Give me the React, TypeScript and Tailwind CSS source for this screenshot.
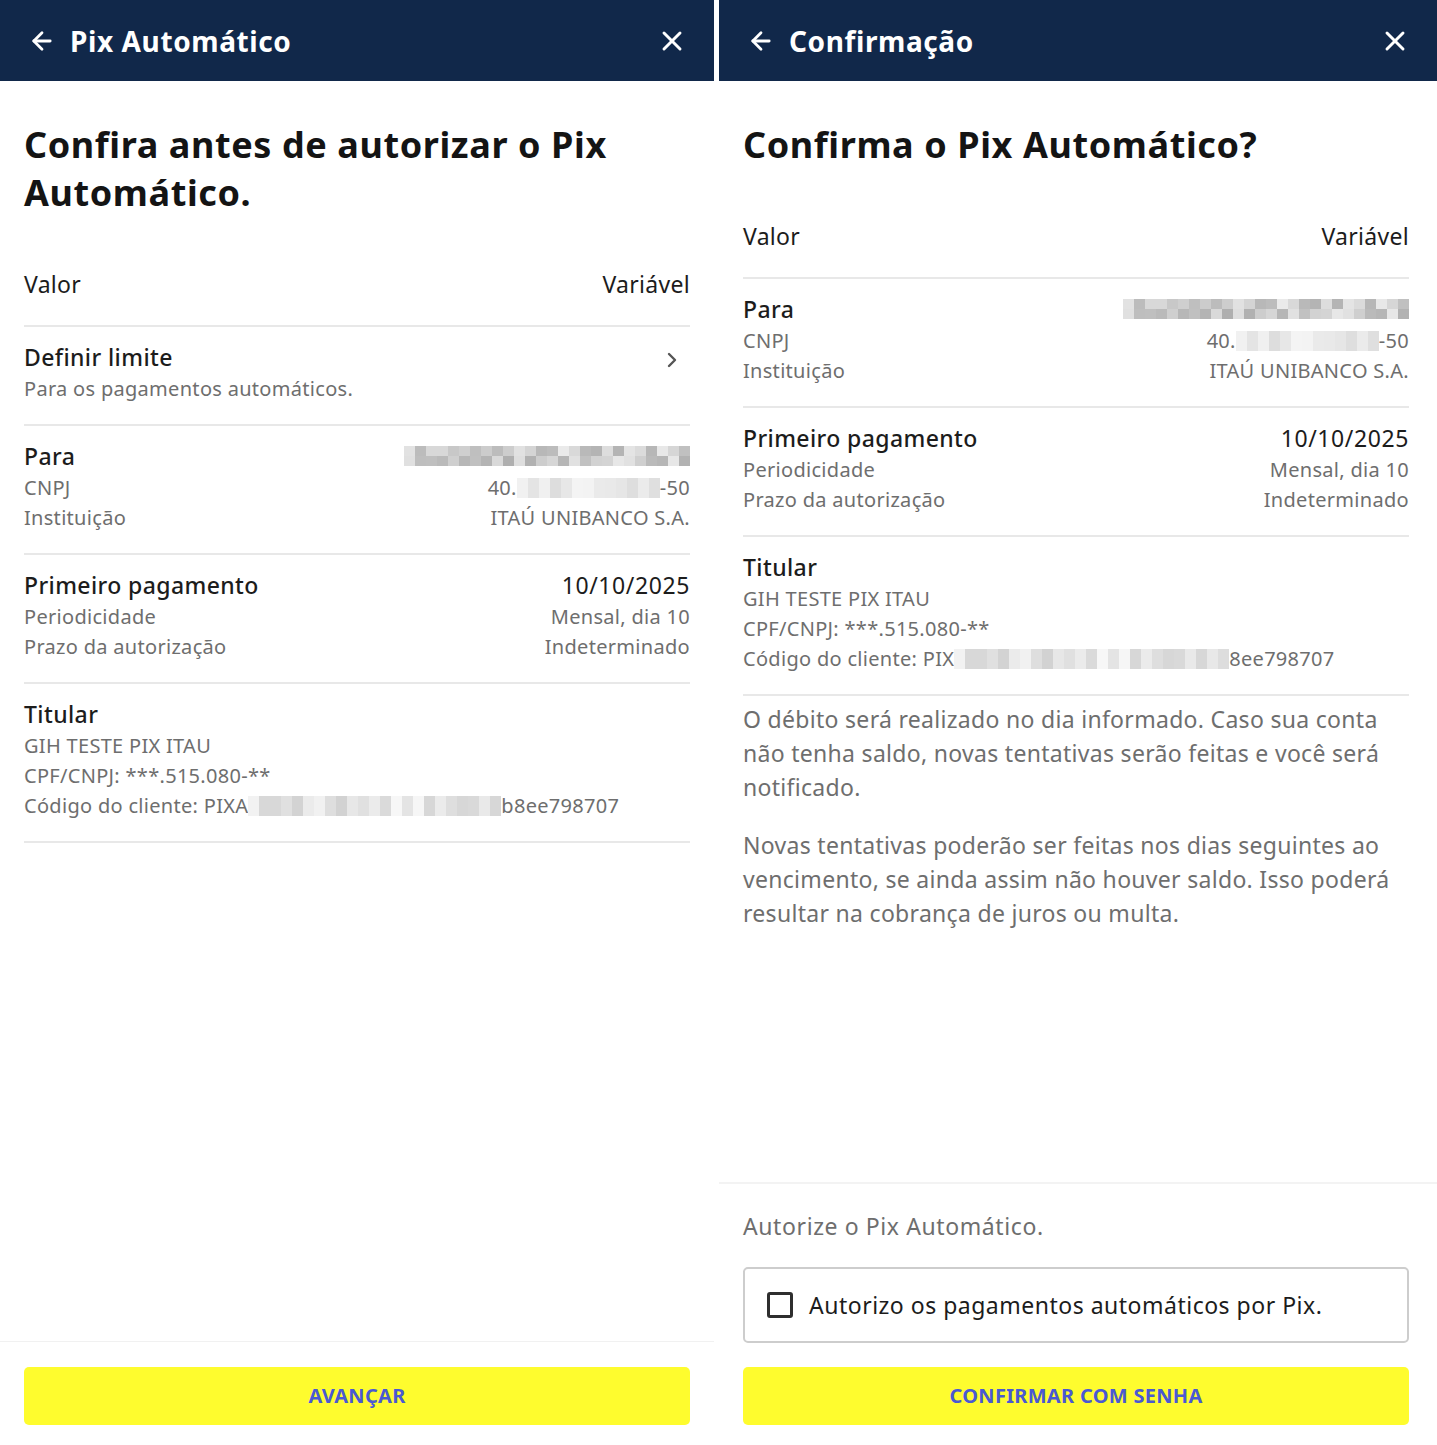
import { ArrowLeft, X, ChevronRight } from "lucide-react";

const font = { fontFamily: "'Noto Sans', 'Open Sans', sans-serif" };

function shade(seed: number, i: number, base: number, spread: number) {
  const v = Math.abs(Math.sin(seed * 97.13 + i * 12.9898) * 43758.5453) % 1;
  const g = Math.round(base + v * spread);
  return `rgb(${g},${g},${g})`;
}

function Pixels({ cols, rows, cell, h, seed, base, spread }: { cols: number; rows: number; cell: number; h: number; seed: number; base: number; spread: number }) {
  return (
    <div className="flex flex-col">
      {Array.from({ length: rows }).map((_, r) => (
        <div key={r} className="flex">
          {Array.from({ length: cols }).map((_, c) => (
            <div key={c} style={{ width: cell, height: h, backgroundColor: shade(seed + r, c, base, spread) }} />
          ))}
        </div>
      ))}
    </div>
  );
}

function Header({ title }: { title: string }) {
  return (
    <div className="h-[81px] bg-[#11284a] flex items-center justify-between pl-[28px] pr-[26px] shrink-0">
      <div className="flex items-center gap-[14px]">
        <ArrowLeft size={28} strokeWidth={2.4} className="text-white" />
        <span className="text-white text-[28px] font-bold tracking-[0.6px]">{title}</span>
      </div>
      <X size={32} strokeWidth={2.2} className="text-white" />
    </div>
  );
}

function Row({ label, value }: { label: string; value: React.ReactNode }) {
  return (
    <div className="flex justify-between items-center text-[20px] leading-[30px] tracking-[0.3px] text-[#6e6e6e]">
      <span>{label}</span>
      <span className="flex items-center">{value}</span>
    </div>
  );
}

function Section({ children }: { children: React.ReactNode }) {
  return <div className="pt-[15px] pb-[20px] border-b-2 border-[#e8e8e8]">{children}</div>;
}

function Title({ children }: { children: React.ReactNode }) {
  return <div className="text-[23px] leading-[30px] tracking-[0.4px] font-medium text-[#1c1c1c]">{children}</div>;
}

function ParaSection() {
  return (
    <Section>
      <div className="flex justify-between items-center">
        <Title>Para</Title>
        <Pixels cols={26} rows={2} cell={11} h={10} seed={3} base={175} spread={60} />
      </div>
      <div className="mt-[2px]">
        <Row label="CNPJ" value={<>40.<Pixels cols={13} rows={1} cell={11} h={20} seed={7} base={218} spread={28} />-50</>} />
        <Row label="Instituição" value="ITAÚ UNIBANCO S.A." />
      </div>
    </Section>
  );
}

function PagamentoSection() {
  return (
    <Section>
      <div className="flex justify-between items-center">
        <Title>Primeiro pagamento</Title>
        <span className="text-[23px] leading-[30px] tracking-[0.6px] text-[#1c1c1c]">10/10/2025</span>
      </div>
      <div className="mt-[2px]">
        <Row label="Periodicidade" value="Mensal, dia 10" />
        <Row label="Prazo da autorização" value="Indeterminado" />
      </div>
    </Section>
  );
}

function TitularSection({ prefix, suffix, cols }: { prefix: string; suffix: string; cols: number }) {
  return (
    <Section>
      <Title>Titular</Title>
      <div className="mt-[2px] text-[20px] leading-[30px] tracking-[0.3px] text-[#6e6e6e]">
        <div>GIH TESTE PIX ITAU</div>
        <div>CPF/CNPJ: ***.515.080-**</div>
        <div className="flex items-center">
          Código do cliente: {prefix}
          <Pixels cols={cols} rows={1} cell={11} h={20} seed={11} base={208} spread={40} />
          {suffix}
        </div>
      </div>
    </Section>
  );
}

function ValorRow() {
  return (
    <div className="flex justify-between items-center leading-[30px] text-[23px] tracking-[0.3px] text-[#1c1c1c] pb-[26px] border-b-2 border-[#e8e8e8]">
      <span>Valor</span>
      <span>Variável</span>
    </div>
  );
}

function YellowButton({ label }: { label: string }) {
  return (
    <button className="w-full h-[58px] rounded-[5px] bg-[#fefc2e] text-[#4a59d2] text-[20px] tracking-[0.3px] font-bold">
      {label}
    </button>
  );
}

export default function App() {
  return (
    <div className="w-[1437px] h-[1445px] flex bg-white overflow-hidden" style={font}>
      <div className="w-[714px] h-full flex flex-col">
        <Header title="Pix Automático" />
        <div className="flex-1 px-[24px]">
          <h1 className="mt-[40px] text-[36px] leading-[48px] font-bold text-[#141414] tracking-[0.6px]">
            Confira antes de autorizar o Pix Automático.
          </h1>
          <div className="mt-[52px]">
            <ValorRow />
            <Section>
              <div className="flex justify-between items-center">
                <div>
                  <Title>Definir limite</Title>
                  <div className="mt-[2px] text-[20px] leading-[30px] tracking-[0.3px] text-[#6e6e6e]">Para os pagamentos automáticos.</div>
                </div>
                <ChevronRight size={24} strokeWidth={2.4} className="text-[#555] mr-[6px] -mt-[26px]" />
              </div>
            </Section>
            <ParaSection />
            <PagamentoSection />
            <TitularSection prefix="PIXA" suffix="b8ee798707" cols={23} />
          </div>
        </div>
        <div className="border-t border-[#f1f1f1] px-[24px] pt-[25px] pb-[20px]">
          <YellowButton label="AVANÇAR" />
        </div>
      </div>
      <div className="w-[5px] bg-white" />
      <div className="w-[718px] h-full flex flex-col">
        <Header title="Confirmação" />
        <div className="flex-1 pl-[24px] pr-[28px]">
          <h1 className="mt-[40px] text-[36px] leading-[48px] font-bold text-[#141414] tracking-[0.6px]">Confirma o Pix Automático?</h1>
          <div className="mt-[52px]">
            <ValorRow />
            <ParaSection />
            <PagamentoSection />
            <TitularSection prefix="PIX" suffix="8ee798707" cols={25} />
            <div className="pt-[6px] text-[23px] leading-[34px] tracking-[0.3px] text-[#6e6e6e]">
              <p>O débito será realizado no dia informado. Caso sua conta não tenha saldo, novas tentativas serão feitas e você será notificado.</p>
              <p className="mt-[24px]">
                Novas tentativas poderão ser feitas nos dias seguintes ao vencimento, se ainda assim não houver saldo. Isso poderá resultar na cobrança de juros ou multa.
              </p>
            </div>
          </div>
        </div>
        <div className="border-t-2 border-[#f3f3f3] pl-[24px] pr-[28px] pt-[27px] pb-[20px]">
          <div className="text-[23px] leading-[30px] tracking-[0.6px] text-[#6e6e6e]">Autorize o Pix Automático.</div>
          <div className="mt-[26px] h-[76px] rounded-[5px] border-2 border-[#cdcdcd] flex items-center pl-[22px] gap-[16px]">
            <div className="w-[26px] h-[26px] rounded-[3px] border-[3px] border-[#2e2e2e]" />
            <span className="text-[23px] tracking-[0.5px] text-[#1c1c1c]">Autorizo os pagamentos automáticos por Pix.</span>
          </div>
          <div className="mt-[24px]">
            <YellowButton label="CONFIRMAR COM SENHA" />
          </div>
        </div>
      </div>
    </div>
  );
}
